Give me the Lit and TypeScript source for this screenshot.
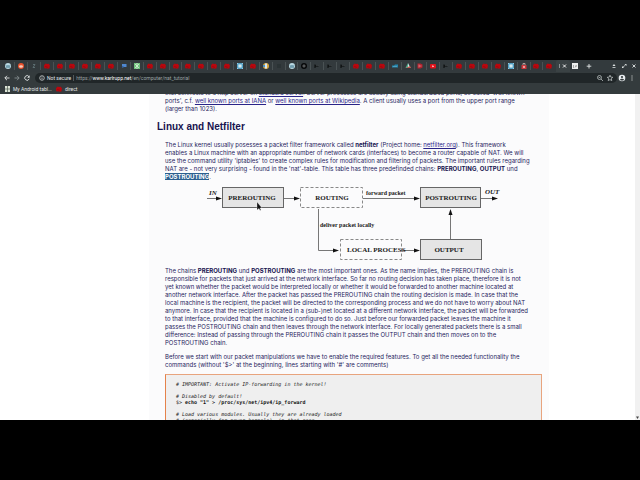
import { LitElement, html, css, svg } from "lit";
import { customElement } from "lit/decorators.js";

const favicon = (kind: string) => {
  switch (kind) {
    case "wp":
      return svg`<circle cx="4" cy="4" r="3" fill="#b9d8e2"/><path d="M2 3l1 3 1-3 1 3 1-3" stroke="#3f7488" stroke-width=".6" fill="none"/>`;
    case "orange":
      return svg`<circle cx="4" cy="4" r="3" fill="#e8502c"/><ellipse cx="4" cy="4.5" rx="2" ry="1.2" fill="#f6cdbd"/>`;
    case "faint":
      return svg`<path d="M3 2.500h2l-2 3h2" stroke="#66787c" stroke-width=".8" fill="none"/>`;
    case "blue":
      return svg`<path d="M2 2h4.500v3H4L2 6z" fill="#4f87cf"/><path d="M1.500 5h2" stroke="#20406c"/>`;
    case "green":
      return svg`<rect x="1" y="1" width="6" height="6" fill="#6fc27c"/><path d="M2 2l4 4M6 2L2 6M4 1v6" stroke="#e3f4e4" stroke-width=".7"/>`;
    case "sky":
      return svg`<rect x="1" y="1" width="6" height="6" fill="#4f9fc4"/><circle cx="4" cy="4" r="1.800" fill="#d5eaf0"/><path d="M1 1l1.500 1.500M7 1L5.500 2.500M1 7l1.500-1.500M7 7L5.500 5.500" stroke="#c9e4ee" stroke-width=".6"/>`;
    case "gold":
      return svg`<circle cx="4" cy="4" r="3" fill="#d9a53c"/><path d="M3 1.500h2v5H3z" fill="#d6e6ee"/><path d="M1 3h2v2H1z" fill="#4b91c0"/>`;
    case "dark":
      return svg`<rect x="2" y="2" width="4" height="4" fill="#2b3335"/>`;
    case "ring":
      return svg`<circle cx="4" cy="4" r="3" fill="#060708"/><circle cx="4" cy="4" r="1.100" fill="none" stroke="#a7acae" stroke-width=".6"/>`;
    case "flag":
      return svg`<path d="M2 2.500v3.500M2 4h3.500" stroke="#070809" stroke-width="1"/><path d="M3 3.500h3" stroke="#4a5052" stroke-width=".5"/>`;
    case "wave":
      return svg`<path d="M1 5.500V3.500h2l1-1h3v3z" fill="#2485ac"/><path d="M2 4.500h4" stroke="#79b8d0" stroke-width=".5"/>`;
    case "drive":
      return svg`<path d="M4 1L1.500 6H4z" fill="#4fb08e"/><path d="M4 1l2.500 5H4z" fill="#d8e3e5"/><path d="M2 6h5l-1-2z" fill="#c2564f"/>`;
    case "letter":
      return svg`<path d="M1.500 1.500h3l2 1v3l-2 1h-3z" fill="#b3222d"/><path d="M3 2.500v3M3 4h2.500" stroke="#e6a3a7" stroke-width=".6"/>`;
    case "play":
      return svg`<rect x="1" y="2" width="6" height="4.500" rx="1" fill="#e0131b"/><path d="M3.400 3.200l1.800 1-1.800 1z" fill="#fff"/>`;
    case "lock":
      return svg`<path d="M1.500 3h5v4h-5z" fill="#c9363a"/><path d="M3 3V1.500h2V3" stroke="#d2b3b0" stroke-width=".8" fill="none"/><path d="M3 4.500h2v1H3z" fill="#fff"/>`;
    default:
      return svg`<path d="M1 3.200l1.600-1.600 1.400.5 1.800-.3 1.300 1.900-.6 1.200.2 1.300-2 .5-1.400-.4-1.700.2-.5-1.300z" fill="#b8070e"/><path d="M2.300 4.600l2.400.7" stroke="#7a060b" stroke-width=".5"/>`;
  }
};

const red = (n: number): string[] => Array(n).fill("red");
const TABS = [
  "wp", "orange", "faint", ...red(6), "blue", "green", ...red(7), "sky", "red",
  "gold", "dark", "wp", "ring", "flag", "flag", "flag", ...red(3), "wave",
  "drive", "letter", "play", "flag", ...red(4), "sky", "lock", ...red(2),
];

@customElement("browser-bar")
export class BrowserBar extends LitElement {
  static styles = css`
    :host { display: block; background: #343b3d; color: #e4e8e8; font: 5px/8px Roboto, sans-serif; }
    * { box-sizing: border-box; }
    button { border: 0; padding: 0; margin: 0; background: none; color: inherit; font: inherit; display: flex; align-items: center; justify-content: center; }
    svg { display: block; flex: none; }
    .strip { display: flex; align-items: center; height: 12px; padding: 0 2px; background: #333a3d; }
    .tabs { display: flex; flex: 1; }
    .tab { flex: 1; height: 8px; border-right: 1px solid #4a5254; }
    .tab:last-child { border-right-color: #333a3d; }
    .active { width: 14px; height: 12px; background: #3a4244; border-radius: 2px 2px 0 0; }
    .after { width: 10px; }
    .new { width: 18px; }
    .controls { display: flex; justify-content: space-between; width: 28px; margin-left: 12px; }
    .nav { display: flex; align-items: center; height: 12px; padding: 0 3px; background: #343b3d; }
    .nav > button { width: 8px; height: 10px; margin-right: 2px; }
    .address { display: flex; align-items: center; flex: 1; height: 10px; border-radius: 5px; background: #202628; margin-left: 2px; padding: 0 3px 0 4px; gap: 2px; }
    .secure { white-space: nowrap; border-right: 1px solid #53595b; padding-right: 2px; line-height: 6px; }
    .url { position: relative; flex: 1; display: flex; height: 8px; }
    .url input { position: absolute; inset: 0; width: 100%; height: 8px; padding: 0; border: 0; background: none; color: transparent; font: inherit; outline: none; }
    .url span { color: #9ca3a4; white-space: pre; }
    .url b { font-weight: 400; color: #fff; }
    .nav .end { width: 8px; margin: 0 1px; }
    .books { display: flex; align-items: center; height: 10px; padding: 0 4px; gap: 3px; }
    .books a { color: inherit; text-decoration: none; display: flex; align-items: center; gap: 2px; }
  `;

  render() {
    return html`
      <div class="strip">
        <div class="tabs">
          ${TABS.map((kind) => html`<button class="tab" aria-label="Tab"><svg width="8" height="8">${favicon(kind)}</svg></button>`)}
        </div>
        <button class="active" aria-label="Current tab">
          <svg width="10" height="8"><path d="M1.500 2v4" stroke="#9fa6a8" stroke-width=".8"/><path d="M5 2.500l3 3M8 2.500l-3 3" stroke="#fff" stroke-width=".9"/></svg>
        </button>
        <button class="after" aria-label="Tab">
          <svg width="8" height="8"><rect x="1" y="1" width="6" height="6" fill="#eceeee"/><path d="M2.500 3v3M4 4h2M4 5.500l1.500-2" stroke="#777" stroke-width=".6"/></svg>
        </button>
        <button class="new" aria-label="New tab"><svg width="8" height="8"><path d="M4 2v4.500M1.700 4.200h4.600" stroke="#e4e8e8" stroke-width=".9"/></svg></button>
        <div class="controls">
          <button aria-label="Minimize"><svg width="8" height="8"><path d="M4 2L2.500 4h3zM2.500 5h3v.8h-3z" fill="#dfe3e3"/></svg></button>
          <button aria-label="Restore"><svg width="8" height="8"><path d="M4.500 2h2v2zM2 4l2 2H2z" fill="#dfe3e3"/><path d="M5.500 3L2.500 5.500" stroke="#dfe3e3" stroke-width=".7"/></svg></button>
          <button aria-label="Close"><svg width="8" height="8"><path d="M2.500 2.500l3 3M5.500 2.500l-3 3" stroke="#dfe3e3" stroke-width=".9"/></svg></button>
        </div>
      </div>
      <div class="nav">
        <button aria-label="Back"><svg width="8" height="8"><path d="M6.500 4H2M4 1.800L1.800 4 4 6.200" stroke="#e4e8e8" stroke-width=".9" fill="none"/></svg></button>
        <button aria-label="Forward"><svg width="8" height="8"><path d="M1.500 4H6M4 1.800L6.200 4 4 6.200" stroke="#858c8e" stroke-width=".9" fill="none"/></svg></button>
        <button aria-label="Reload"><svg width="8" height="8"><path d="M6 2.700A2.300 2.300 0 1 0 6.200 4.800" stroke="#e4e8e8" stroke-width=".9" fill="none"/><path d="M6.600 1.300v2.400H4.200z" fill="#e4e8e8"/></svg></button>
        <div class="address">
          <svg width="6" height="8"><circle cx="3" cy="4" r="2.300" fill="none" stroke="#c9cecf" stroke-width=".8"/><path d="M3 3.600v1.700M3 2.500v.7" stroke="#c9cecf" stroke-width=".8"/></svg>
          <span class="secure">Not secure</span>
          <div class="url"><span>https://<b>www.karlrupp.net</b>/en/computer/nat_tutorial</span><input aria-label="Address" /></div>
          <svg width="8" height="8"><circle cx="3.500" cy="3.500" r="2" fill="none" stroke="#b6bcbd" stroke-width=".8"/><path d="M5 5l2 2M2.700 3.500h1.600" stroke="#b6bcbd" stroke-width=".8"/></svg>
          <svg width="8" height="8"><path d="M4 1.200l.8 1.900 2 .2-1.500 1.300.5 2L4 5.600l-1.800 1 .5-2-1.500-1.300 2-.2z" fill="none" stroke="#c9cecf" stroke-width=".7"/></svg>
        </div>
        <button class="end" aria-label="Profile"><svg width="8" height="8"><circle cx="4" cy="4" r="3.300" fill="#e9edf0"/><circle cx="4" cy="3" r="1.100" fill="#343b3d"/><path d="M2 5.700c.5-1.300 3.500-1.300 4 0-.8 1.200-3.200 1.200-4 0z" fill="#343b3d"/></svg></button>
        <button class="end" aria-label="Menu"><svg width="8" height="8"><path d="M3.500 1.500h1v1h-1zM3.500 3.500h1v1h-1zM3.500 5.500h1v1h-1z" fill="#dfe3e3"/></svg></button>
      </div>
      <nav class="books">
        <a href="#"><svg width="7" height="8"><rect x="1" y="1" width="5" height="6" fill="#dbe3d6"/><path d="M3.500 1v6M1 4h5" stroke="#4f5b50" stroke-width=".7"/></svg>My Android tabl...</a>
        <a href="#"><svg width="8" height="8">${favicon("red")}</svg>direct</a>
      </nav>
    `;
  }
}

@customElement("packet-diagram")
export class PacketDiagram extends LitElement {
  static styles = css`
    :host { display: block; }
    svg { display: block; }
    text { font-family: "Liberation Serif", serif; font-weight: 700; fill: #1a1a1a; }
    .label { font-size: 6px; }
    .name, .io { font-size: 7px; }
    .io { font-style: italic; }
    .solid { fill: #e5e5e5; stroke: #666; }
    .dash { fill: none; stroke: #888; stroke-dasharray: 3 2; }
    .wire { fill: none; stroke: #777; }
  `;

  render() {
    const head = (x: number, y: number) => svg`<path d="M${x} ${y}l-6-2v4z" fill="#111"/>`;
    return html`
      <svg width="300" height="78" viewBox="205 184 300 78" role="img" aria-label="Packet flow through the nat table">
        <path class="wire" d="M207 198.500h9M284 198.500h11M363 198.500h52M481 198.500h11M318.500 209v41.500h15M402 250.500h13M450.500 240v-25"/>
        <rect class="solid" x="222.500" y="187.500" width="61" height="20"/>
        <rect class="dash" x="300.500" y="187.500" width="62" height="20"/>
        <rect class="solid" x="420.500" y="187.500" width="60" height="20"/>
        <rect class="dash" x="340.500" y="239.500" width="61" height="20"/>
        <rect class="solid" x="420.500" y="239.500" width="61" height="20"/>
        ${head(222, 198.5)}${head(300, 198.5)}${head(420, 198.5)}${head(498, 198.5)}${head(339, 250.5)}${head(420, 250.5)}
        <path d="M450.500 209l-2 6h4z" fill="#111"/>
        <text class="io" x="209" y="195">IN</text>
        <text class="io" x="485" y="194">OUT</text>
        <text class="name" x="252" y="200" text-anchor="middle">PREROUTING</text>
        <text class="name" x="332" y="200" text-anchor="middle">ROUTING</text>
        <text class="name" x="451" y="200" text-anchor="middle">POSTROUTING</text>
        <text class="name" x="347" y="252">LOCAL PROCESS</text>
        <text class="name" x="449" y="252" text-anchor="middle">OUTPUT</text>
        <text class="label" x="366" y="195">forward packet</text>
        <text class="label" x="320" y="227">deliver packet locally</text>
        <path d="M257 202v8l2-1.500 1 2 1-.5-1-2h2z" fill="#111" stroke="#fff" stroke-width=".3"/>
      </svg>
    `;
  }
}

@customElement("app-root")
export class AppRoot extends LitElement {
  static styles = css`
    :host { display: flex; flex-direction: column; box-sizing: border-box; height: 100vh; padding: 60px 0; background: #000; overflow: hidden; }
    * { box-sizing: border-box; }
    browser-bar { flex: none; }
    .view { display: flex; flex: 1; min-height: 0; background: #fff; overflow: hidden; }
    .page { flex: 1; min-width: 0; overflow: hidden; }
    .column { width: 63%; margin-left: 149px; padding: 0 7px 0 16px; background: #fbfbfc; color: #1f1b5c; font: 6px/8px Inter, "Liberation Sans", sans-serif; white-space: nowrap; min-height: 100%; }
    p { margin: 0; }
    a { color: #2a2488; }
    b { color: #17134f; }
    .intro { margin-top: -5px; }
    h2 { margin: 6px 0 6px -8px; font: 700 10px/16px "Liberation Sans", Arial, sans-serif; color: #17134f; }
    mark { background: #2b5f8f; color: #fff; font-weight: 700; }
    .figure { margin: 3px 0 5px 40px; }
    .more { margin-top: 6px; }
    pre { margin: 5px 0 0; padding: 6px 10px; border: 1px solid #e8a47e; border-left-color: #e5824a; background: #efefef; color: #222; font: 5px/6px "DejaVu Sans Mono", monospace; height: 80px; }
    pre b { color: #111; }
    .scroll { width: 5px; background: #f1f1f1; display: flex; flex-direction: column; justify-content: flex-end; }
  `;

  render() {
    return html`
      <browser-bar></browser-bar>
      <div class="view">
        <main class="page">
          <div class="column">
            <p class="intro">that connects to a http server on <a href="#">standard server</a>. Server processes are usually using standardized ports, so called 'well known<br />
            ports', c.f. <a href="#">well known ports at IANA</a> or <a href="#">well known ports at Wikipedia</a>. A client usually uses a port from the upper port range<br />
            (larger than 1023).</p>
            <h2>Linux and Netfilter</h2>
            <p>The Linux kernel usually posesses a packet filter framework called <b>netfilter</b> (Project home: <a href="#">netfilter.org</a>). This framework<br />
            enables a Linux machine with an appropriate number of network cards (interfaces) to become a router capable of NAT. We will<br />
            use the command utility 'iptables' to create complex rules for modification and filtering of packets. The important rules regarding<br />
            NAT are - not very surprising - found in the 'nat'-table. This table has three predefinded chains: <b>PREROUTING</b>, <b>OUTPUT</b> und<br />
            <mark>POSTROUTING</mark>.</p>
            <packet-diagram class="figure"></packet-diagram>
            <p>The chains <b>PREROUTING</b> und <b>POSTROUTING</b> are the most important ones. As the name implies, the PREROUTING chain is<br />
            responsible for packets that just arrived at the network interface. So far no routing decision has taken place, therefore it is not<br />
            yet known whether the packet would be interpreted locally or whether it would be forwarded to another machine located at<br />
            another network interface. After the packet has passed the PREROUTING chain the routing decision is made. In case that the<br />
            local machine is the recipient, the packet will be directed to the corresponding process and we do not have to worry about NAT<br />
            anymore. In case that the recipient is located in a (sub-)net located at a different network interface, the packet will be forwarded<br />
            to that interface, provided that the machine is configured to do so. Just before our forwarded packet leaves the machine it<br />
            passes the POSTROUTING chain and then leaves through the network interface. For locally generated packets there is a small<br />
            difference: Instead of passing through the PREROUTING chain it passes the OUTPUT chain and then moves on to the<br />
            POSTROUTING chain.</p>
            <p class="more">Before we start with our packet manipulations we have to enable the required features. To get all the needed functionality the<br />
            commands (without '$>' at the beginning, lines starting with '#' are comments)</p>
            <pre><i># IMPORTANT: Activate IP-forwarding in the kernel!</i>

<i># Disabled by default!</i>
$> <b>echo "1" > /proc/sys/net/ipv4/ip_forward</b>

<i># Load various modules. Usually they are already loaded</i>
<i># (especially for newer kernels), in that case</i></pre>
          </div>
        </main>
        <div class="scroll"><svg width="5" height="5"><path d="M1 1.500h3L2.500 4z" fill="#444"/></svg></div>
      </div>
    `;
  }
}
